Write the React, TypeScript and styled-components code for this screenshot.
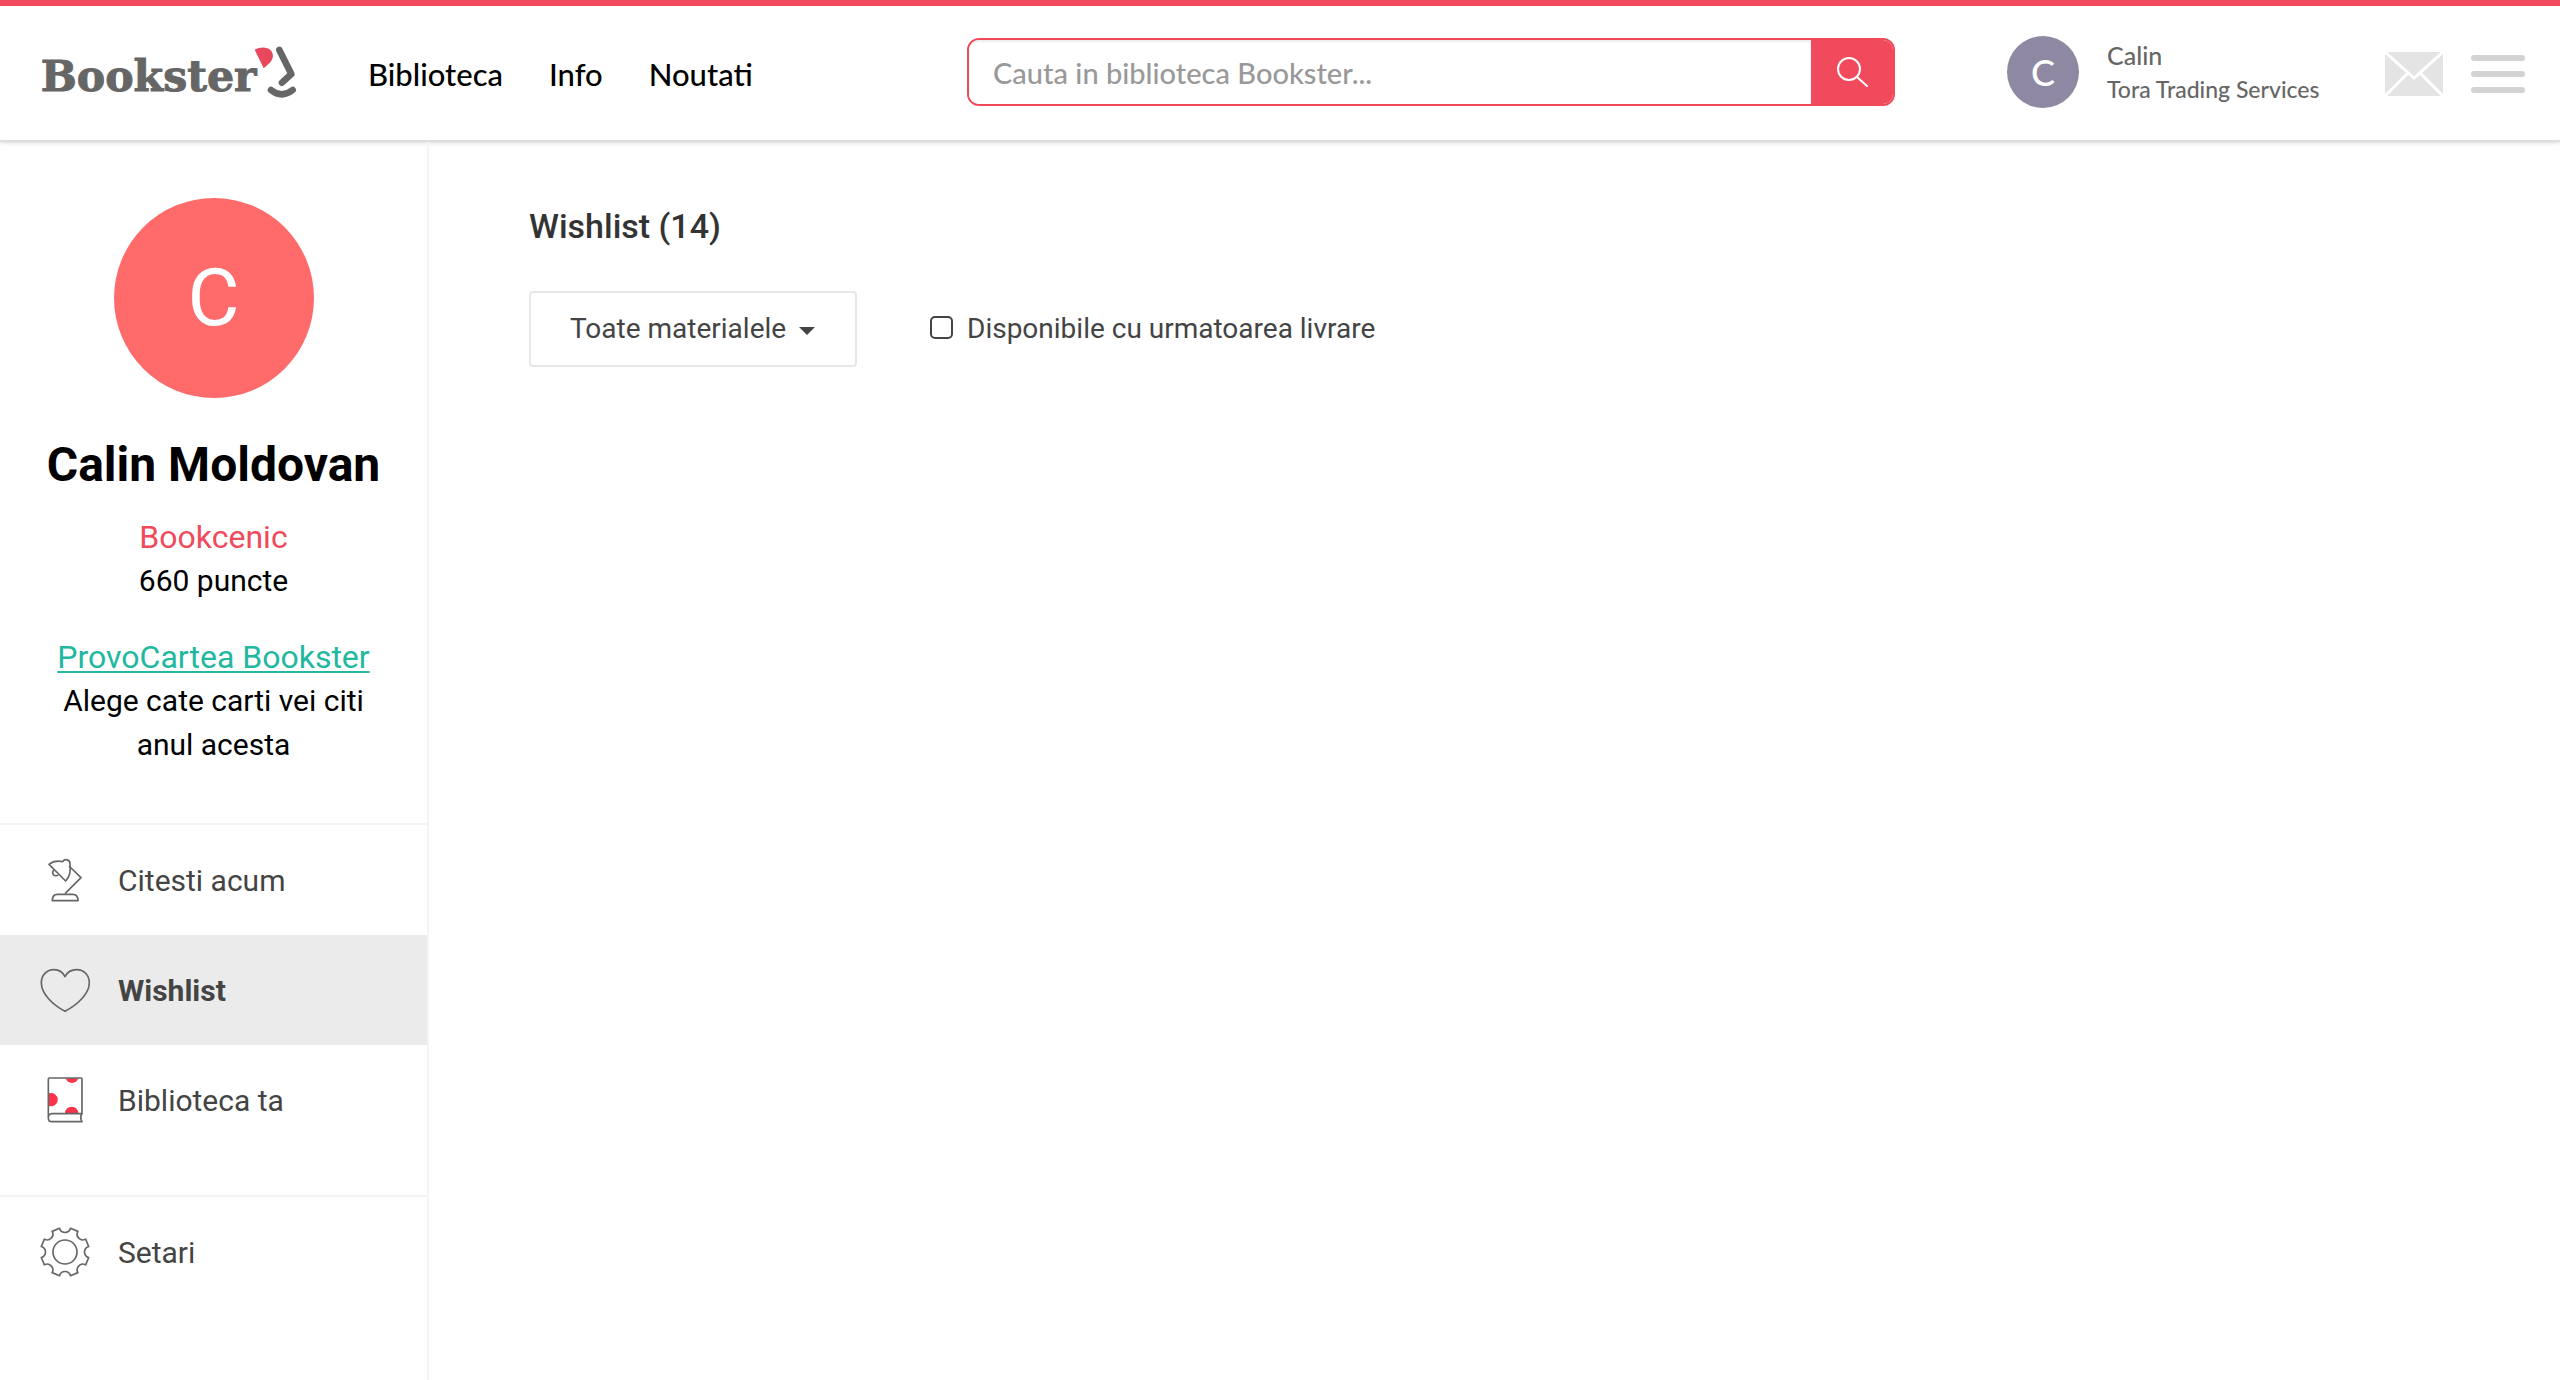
import React from "react";
import styled, { createGlobalStyle } from "styled-components";

const RED = "#f04a5c";
const LINE = "#f4f4f4";
const BRAND_FONT = `Lato, "Open Sans", sans-serif`;

const GlobalStyle = createGlobalStyle`
  *, *::before, *::after { box-sizing: border-box; }
  html, body, #root { height: 100%; }
  body {
    margin: 0;
    background: #fff;
    color: #444;
    font-family: Roboto, "Liberation Sans", sans-serif;
    font-size: 30px;
  }
  a { color: inherit; text-decoration: none; }
  button { border: 0; padding: 0; background: none; cursor: pointer; }
  svg { display: block; flex: none; }
`;

const Page = styled.div`
  min-height: 100%;
  display: flex;
  flex-direction: column;
`;

const Header = styled.header`
  display: grid;
  grid-template-columns: minmax(max-content, 967fr) 928fr minmax(max-content, 665fr);
  align-items: center;
  height: 142px;
  padding-bottom: 2px;
  border-top: 6px solid ${RED};
  border-bottom: 2px solid #ddd;
  box-shadow: 0 1px 4px rgba(0, 0, 0, 0.15);
  font-family: ${BRAND_FONT};
`;

const Brand = styled.div`
  display: flex;
  align-items: center;
  gap: 58px;
  padding-left: 30px;
`;

const Wordmark = styled.text`
  font-family: "DejaVu Serif", serif;
  font-weight: 700;
  font-size: 128px;
  fill: #666;
  stroke: #666;
  stroke-width: 3px;
`;

const Nav = styled.nav`
  display: flex;
  gap: 46px;
  padding-top: 4px;
  color: #000;
  font-size: 31px;
  font-weight: 500;
  line-height: 36px;
`;

const SearchForm = styled.form`
  display: flex;
  height: 68px;
  border: 2px solid ${RED};
  border-radius: 12px;
  overflow: hidden;
`;

const SearchInput = styled.input`
  flex: 1;
  min-width: 0;
  border: 0;
  outline: 0;
  padding: 0 24px;
  box-shadow: inset 0 2px 2px rgba(0, 0, 0, 0.07);
  font-family: ${BRAND_FONT};
  font-size: 29px;
  font-weight: 500;
  color: #555;
  &::placeholder { color: #999; opacity: 1; }
`;

const SearchButton = styled.button`
  width: 82px;
  display: grid;
  place-items: center;
  background: ${RED};
`;

const Account = styled.div`
  display: flex;
  align-items: center;
  justify-content: space-between;
  padding: 0 35px 0 112px;
`;

const UserLink = styled.a`
  display: flex;
  align-items: center;
  gap: 28px;
  color: #666;
  font-size: 23px;
  font-weight: 500;
  line-height: 34px;
`;

const UserName = styled.div`
  font-size: 25px;
`;

const Avatar = styled.div<{ $size: number; $color: string; $font: number }>`
  display: grid;
  place-items: center;
  width: ${(p) => p.$size}px;
  height: ${(p) => p.$size}px;
  border-radius: 50%;
  background: ${(p) => p.$color};
  color: #fff;
  font-size: ${(p) => p.$font}px;
  line-height: 1;
`;

const Actions = styled.div`
  display: flex;
  align-items: center;
  gap: 28px;
  padding-top: 4px;
`;

const Body = styled.div`
  flex: 1;
  display: flex;
`;

const Sidebar = styled.aside`
  flex: none;
  width: 429px;
  border-right: 2px solid ${LINE};
`;

const Profile = styled.section`
  display: flex;
  flex-direction: column;
  align-items: center;
  padding: 56px 48px;
  color: #000;
  text-align: center;
  line-height: 44px;
`;

const FullName = styled.h1`
  margin: 39px -24px 22px;
  font-size: 48px;
  font-weight: 700;
  line-height: 56px;
  white-space: nowrap;
`;

const Rank = styled.div`
  color: ${RED};
  font-size: 32px;
`;

const Points = styled.div`
  margin-bottom: 32px;
`;

const ChallengeLink = styled.a`
  color: #22b8a0;
  font-size: 32px;
  text-decoration: underline;
  text-decoration-thickness: 2px;
  text-underline-offset: 3px;
  text-decoration-skip-ink: none;
`;

const Menu = styled.ul<{ $gap?: number }>`
  margin: 0;
  padding: 0 0 ${(p) => p.$gap ?? 0}px;
  border-top: 2px solid ${LINE};
  list-style: none;
`;

const MenuLink = styled.a<{ $active?: boolean }>`
  display: flex;
  align-items: center;
  gap: 28px;
  height: 110px;
  padding-left: 40px;
  background: ${(p) => (p.$active ? "#ebebeb" : "transparent")};
  font-weight: ${(p) => (p.$active ? 700 : 400)};
`;

const Main = styled.main`
  flex: 1;
  padding: 64px 100px;
`;

const Title = styled.h2`
  margin: 0 0 45px;
  color: #333;
  font-size: 34px;
  font-weight: 500;
  line-height: 40px;
`;

const Filters = styled.div`
  display: flex;
  align-items: center;
  gap: 73px;
  font-size: 28px;
`;

const SelectBox = styled.div`
  display: grid;
  align-items: center;
  & > * { grid-area: 1 / 1; }
  & > svg { justify-self: end; margin: 4px 42px 0 0; pointer-events: none; }
`;

const Select = styled.select`
  appearance: none;
  width: 328px;
  height: 76px;
  padding: 0 39px 2px;
  border: 2px solid #e5e8eb;
  border-radius: 4px;
  background: #fff;
  color: #444;
  font: inherit;
`;

const CheckLabel = styled.label`
  display: flex;
  align-items: center;
  gap: 14px;
  padding-bottom: 2px;
`;

const Checkbox = styled.input`
  appearance: none;
  width: 23px;
  height: 23px;
  margin: 0 0 2px;
  border: 2px solid #444;
  border-radius: 5px;
  background: #fff;
  &:checked { background: #444; }
`;

const Icon = ({ top, children }: { top: number; children: React.ReactNode }) => (
  <svg
    width="50"
    height="50"
    viewBox={`30 ${top} 150 150`}
    fill="none"
    stroke="#666"
    strokeWidth="5"
    strokeLinejoin="round"
    aria-hidden="true"
  >
    {children}
  </svg>
);

const LampIcon = () => (
  <Icon top={45}>
    <path d="M57 73C68 64 84 62 98 65C104 55 121 58 120 72C123 96 118 112 107 123Z" />
    <path d="M71 90C64 99 70 111 85 106" />
    <path d="M117 78L153 113L105 161" />
    <path d="M67 182C67 169 74 163 82 163H128C138 163 144 170 144 182Z" />
  </Icon>
);

const HeartIcon = () => (
  <Icon top={375}>
    <path d="M105 410C98 396 86 389 72 389C50 389 34 406 34 428C34 462 68 494 105 514C142 494 178 462 178 428C178 406 162 389 140 389C124 389 112 396 105 410Z" />
  </Icon>
);

const BookIcon = () => (
  <Icon top={45}>
    <g fill="#fb3449" stroke="none">
      <path d="M107 55H145A20 20 0 0 1 107 55Z" />
      <path d="M57 100A20 20 0 1 1 57 138Z" />
      <path d="M105 160A20 20 0 0 1 145 160Z" />
    </g>
    <path d="M55 174V57Q55 54 58 54H153Q156 54 156 57V161H66Q55 162 55 173Q55 185 66 185H156Q149 173 155 162" />
  </Icon>
);

// Eight scalloped notches, 45 degrees apart, joined by straight tooth tips.
const gearPath = (() => {
  const point = (deg: number) => {
    const a = (deg * Math.PI) / 180;
    return `${(105 + 73 * Math.cos(a)).toFixed(1)} ${(576 + 73 * Math.sin(a)).toFixed(1)}`;
  };
  let d = "";
  for (let i = 0; i < 8; i++) {
    d += `${i ? "L" : "M"}${point(i * 45 - 13)}A17 17 0 0 0 ${point(i * 45 + 13)}`;
  }
  return d + "Z";
})();

const GearIcon = () => (
  <Icon top={501}>
    <path d={gearPath} />
    <circle cx="105" cy="576" r="36" />
  </Icon>
);

const Logo = () => (
  <svg width="280" height="80" viewBox="0 6 840 240" role="img" aria-label="Bookster">
    <Wordmark x="32" y="184">Bookster</Wordmark>
    <path fill="#e9485c" d="M674 59C692 50 712 51 722 61C731 71 731 84 722 95C716 102 709 108 701 115Z" />
    <g fill="none" stroke="#666" strokeWidth="20" strokeLinecap="round" strokeLinejoin="round">
      <path d="M748 60L784 132L756 158" />
      <path d="M723 180Q755 206 788 180" />
    </g>
  </svg>
);

const menuItems = [
  { label: "Citesti acum", icon: <LampIcon /> },
  { label: "Wishlist", icon: <HeartIcon />, active: true },
  { label: "Biblioteca ta", icon: <BookIcon /> },
];

export default function App() {
  return (
    <Page>
      <GlobalStyle />
      <Header>
        <Brand>
          <a href="#home"><Logo /></a>
          <Nav>
            <a href="#biblioteca">Biblioteca</a>
            <a href="#info">Info</a>
            <a href="#noutati">Noutati</a>
          </Nav>
        </Brand>
        <SearchForm role="search" onSubmit={(e) => e.preventDefault()}>
          <SearchInput
            type="text"
            aria-label="Cauta in biblioteca Bookster"
            placeholder="Cauta in biblioteca Bookster..."
          />
          <SearchButton type="submit" aria-label="Cauta">
            <svg width="32" height="32" viewBox="0 0 32 32" fill="none" stroke="#fff" strokeWidth="2">
              <circle cx="13" cy="13" r="11" />
              <path d="M21 21L31 30" strokeLinecap="round" />
            </svg>
          </SearchButton>
        </SearchForm>
        <Account>
          <UserLink href="#profil">
            <Avatar $size={72} $color="#8f88a3" $font={36}>C</Avatar>
            <div>
              <UserName>Calin</UserName>
              <div>Tora Trading Services</div>
            </div>
          </UserLink>
          <Actions>
            <button type="button" aria-label="Mesaje">
              <svg width="58" height="44" viewBox="0 0 58 44">
                <rect width="58" height="44" rx="1" fill="#e4e4e4" />
                <path d="M0 0L29 26L58 0M0 44L23 21M58 44L35 21" fill="none" stroke="#fff" strokeWidth="3" />
              </svg>
            </button>
            <button type="button" aria-label="Meniu">
              <svg width="54" height="38" viewBox="0 0 54 38" fill="#d3d3d3">
                <rect width="54" height="6" rx="3" />
                <rect y="16" width="54" height="6" rx="3" />
                <rect y="32" width="54" height="6" rx="3" />
              </svg>
            </button>
          </Actions>
        </Account>
      </Header>
      <Body>
        <Sidebar>
          <Profile>
            <Avatar $size={200} $color="#ff6b6b" $font={80}>C</Avatar>
            <FullName>Calin Moldovan</FullName>
            <Rank>Bookcenic</Rank>
            <Points>660 puncte</Points>
            <ChallengeLink href="#provocartea">ProvoCartea Bookster</ChallengeLink>
            <div>Alege cate carti vei citi anul acesta</div>
          </Profile>
          <Menu $gap={40}>
            {menuItems.map((item) => (
              <li key={item.label}>
                <MenuLink
                  href="#"
                  $active={item.active}
                  aria-current={item.active ? "page" : undefined}
                >
                  {item.icon}
                  {item.label}
                </MenuLink>
              </li>
            ))}
          </Menu>
          <Menu>
            <li>
              <MenuLink href="#setari">
                <GearIcon />
                Setari
              </MenuLink>
            </li>
          </Menu>
        </Sidebar>
        <Main>
          <Title>Wishlist (14)</Title>
          <Filters>
            <SelectBox>
              <Select aria-label="Tip material">
                <option>Toate materialele</option>
              </Select>
              <svg width="16" height="8" viewBox="0 0 16 8" fill="#444">
                <path d="M0 0H16L8 8Z" />
              </svg>
            </SelectBox>
            <CheckLabel>
              <Checkbox type="checkbox" />
              Disponibile cu urmatoarea livrare
            </CheckLabel>
          </Filters>
        </Main>
      </Body>
    </Page>
  );
}
